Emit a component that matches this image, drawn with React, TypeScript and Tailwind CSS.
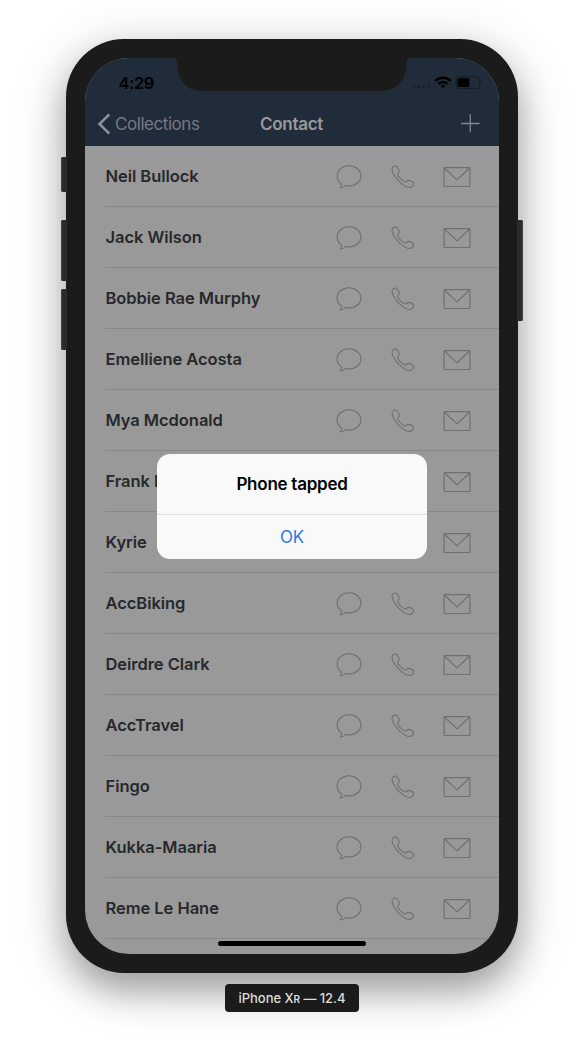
import React from "react";

const contacts = [
  "Neil Bullock",
  "Jack Wilson",
  "Bobbie Rae Murphy",
  "Emelliene Acosta",
  "Mya Mcdonald",
  "Frank I",
  "Kyrie",
  "AccBiking",
  "Deirdre Clark",
  "AccTravel",
  "Fingo",
  "Kukka-Maaria",
  "Reme Le Hane",
];

function ChatIcon() {
  return (
    <svg width="28" height="26" viewBox="0 0 28 26" fill="none" stroke="#707070" strokeWidth="1.1" strokeLinejoin="round">
      <path d="M14 1.8C7.400 1.800 2.100 6.200 2.100 11.900c0 3.200 1.700 6.200 4.600 8.100 .2 1.500-.3 2.700-1.500 3.700 2.300.2 4.200-.5 5.600-2.200 1.100.3 2.200.4 3.300.4 6.600 0 11.800-4.400 11.800-10S20.700 1.800 14 1.800Z" />
    </svg>
  );
}

function PhoneIcon() {
  return (
    <svg width="26" height="26" viewBox="0 0 26 26" fill="none" stroke="#707070" strokeWidth="1.1" strokeLinejoin="round">
      <path d="M2.600 3.500C3.800 2 5.700 1.500 6.800 2.500C7.800 3.700 9 5.400 9.300 6.900C9.500 8.600 7.500 9.300 7.600 10.700C8.100 13 12.400 17.300 14.900 18C16.500 18.300 17 16.400 18.700 16.400C20.300 16.500 22.500 17.600 23.400 18.800C24.200 20.300 22.500 22.700 20.500 23.400C15.500 24.500 3.700 14.500 2.100 5.900C2 4.900 2.100 4.100 2.600 3.500Z" />
    </svg>
  );
}

function MailIcon() {
  return (
    <svg width="28" height="22" viewBox="0 0 28 22" fill="none" stroke="#707070" strokeWidth="1.200" strokeLinejoin="round">
      <rect x="1.100" y="1.700" width="25.800" height="18.800" rx="0.500" />
      <path d="m1.400 2 12.600 11.900L26.600 2" />
    </svg>
  );
}

function StatusIcons() {
  return (
    <svg width="72" height="16" viewBox="0 0 72 16" className="absolute left-[325px] top-[17px]">
      <g fill="#19222d">
        <circle cx="3.500" cy="11.500" r="1.600" />
        <circle cx="8.500" cy="11.500" r="1.600" />
        <circle cx="13.500" cy="11.500" r="1.600" />
        <circle cx="18.500" cy="11.500" r="1.600" />
      </g>
      <g fill="none" stroke="#000" strokeWidth="2.300">
        <path d="M25.200 6a11 11 0 0 1 15.600 0" />
        <path d="M28.200 9a6.800 6.800 0 0 1 9.600 0" />
      </g>
      <path d="m33 13.200-2.300-2.400a3.400 3.400 0 0 1 4.600 0Z" />
      <rect x="46.300" y="1.800" width="23.500" height="11.700" rx="3" fill="none" stroke="#141c25" />
      <path d="M70.800 6v3.500q1.200-.4 1.200-1.750T70.800 6Z" fill="#141c25" />
      <rect x="47.600" y="3.300" width="11.700" height="8.800" rx="1.300" />
    </svg>
  );
}

function Header() {
  return (
    <header className="relative h-[88px] shrink-0 bg-[#212c3a]">
      <svg width="240" height="34" viewBox="0 0 240 34" className="absolute left-[87px] top-0" fill="#1b1b1b">
        <path d="M0 0C3.500 0 5 2 5 5C5 21 14 33 30 33H209C225 33 234.500 21 234.500 5C234.500 2 236 0 239.500 0Z" />
      </svg>
      <div className="absolute left-[33.500px] top-[15px] text-[16.500px] leading-5 font-semibold tracking-[-0.400px] text-black">4:29</div>
      <StatusIcons />
      <div className="flex h-full items-end">
        <div className="grid h-11 w-full grid-cols-3 items-center pl-3 pr-[19px]">
          <div className="flex items-center gap-[4px] text-[#74797f]">
            <svg width="14" height="22" viewBox="0 0 14 22" fill="none" stroke="#8d9094" strokeWidth="2.600">
              <path d="M12.300 1.400 2.500 11l9.800 9.600" />
            </svg>
            <span className="text-[17px] leading-5 tracking-[-0.450px]">Collections</span>
          </div>
          <h1 className="pl-[6px] text-center text-[17px] leading-5 font-semibold tracking-[-0.300px] text-[#999]">Contact</h1>
          <svg width="19" height="20" viewBox="0 0 19 20" className="mb-0.5 justify-self-end" stroke="#85898e" strokeWidth="1.300">
            <path d="M0 10.500h18.500M9.300 1.200v18" />
          </svg>
        </div>
      </div>
    </header>
  );
}

function ContactRow({ name }: { name: string }) {
  return (
    <li className="ml-5 flex h-[61px] shrink-0 items-center border-b border-[#878787] pr-[28px]">
      <span className="flex-1 pl-[0.500px] text-[16.500px] leading-5 font-semibold tracking-[-0.050px] whitespace-nowrap text-[#27282b]">{name}</span>
      <span className="flex items-center pt-px">
        <span className="mr-[27px] flex"><ChatIcon /></span>
        <span className="mr-[27px] flex"><PhoneIcon /></span>
        <MailIcon />
      </span>
    </li>
  );
}

function Alert() {
  return (
    <div role="alertdialog" className="absolute left-[72px] top-[396px] flex h-[104.500px] w-[270px] flex-col overflow-hidden rounded-[13px] bg-[#f9f9f9] text-center">
      <div className="flex h-[60px] items-center justify-center pt-[2px] text-[17px] font-semibold tracking-[-0.250px] text-black">Phone tapped</div>
      <button className="flex flex-1 items-center justify-center border-t border-[#e0e0e0] pt-[2px] text-[17px] tracking-[-0.300px] text-[#2a7de1]">OK</button>
    </div>
  );
}

export default function App() {
  return (
    <main className="flex h-[1048px] w-[584px] flex-col items-center overflow-hidden bg-white pt-[39px] font-['Inter',sans-serif]">
      <div className="relative h-[934px] w-[452px] shrink-0 rounded-[58px] bg-[#1b1b1b] p-[19px] shadow-[0_18px_34px_rgba(0,0,0,0.3),0_10px_60px_rgba(0,0,0,0.16)]">
        <div className="absolute -left-[5px] top-[118px] h-[35px] w-[6px] rounded-l-[2px] bg-[#2b2b2b] shadow-[inset_1px_0_0_#444]" />
        <div className="absolute -left-[5px] top-[181px] h-[61px] w-[6px] rounded-l-[2px] bg-[#2b2b2b] shadow-[inset_1px_0_0_#444]" />
        <div className="absolute -left-[5px] top-[250px] h-[61px] w-[6px] rounded-l-[2px] bg-[#2b2b2b] shadow-[inset_1px_0_0_#444]" />
        <div className="absolute -right-[5px] top-[181px] h-[101px] w-[6px] rounded-r-[2px] bg-[#2b2b2b] shadow-[inset_-1px_0_0_#444]" />
        <div className="relative flex h-[896px] w-[414px] flex-col overflow-hidden rounded-[44px] bg-[#999]">
          <Header />
          <ul className="flex flex-col">
            {contacts.map((name) => (
              <ContactRow key={name} name={name} />
            ))}
          </ul>
          <Alert />
          <div className="absolute bottom-2 left-[133px] h-[5px] w-[148px] rounded-full bg-black" />
        </div>
      </div>
      <div className="relative mt-[11px] flex h-7 w-[134px] shrink-0 items-center justify-center rounded-[4px] bg-[#1b1b1b] pt-[2px] text-[13px] font-medium tracking-[-0.050px] text-[#ddd]">
        <span>iPhone X<span className="text-[10px] font-semibold">R</span> — 12.4</span>
      </div>
    </main>
  );
}
